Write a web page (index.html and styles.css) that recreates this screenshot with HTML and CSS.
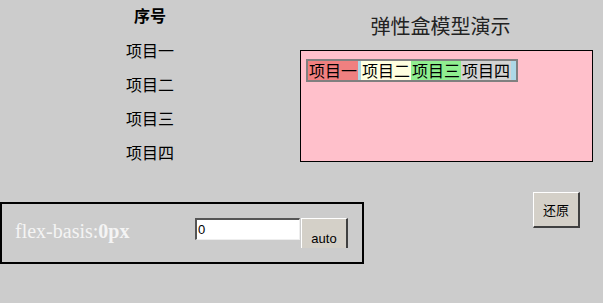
FILE: index.html
```html
<!DOCTYPE html>
<html lang="zh-CN">
<head>
    <meta charset="UTF-8">
    <title>弹性盒模型演示</title>
    <link rel="stylesheet" href="styles.css">
</head>
<body>
    <div class="top">
        <div class="list">
            <div class="list-head">序号</div>
            <div class="list-row">项目一</div>
            <div class="list-row">项目二</div>
            <div class="list-row">项目三</div>
            <div class="list-row">项目四</div>
        </div>
        <div class="demo">
            <h2 class="demo-title">弹性盒模型演示</h2>
            <div class="stage">
                <div class="flexbox">
                    <div class="item item-1">项目一</div>
                    <div class="item item-2">项目二</div>
                    <div class="item item-3">项目三</div>
                    <div class="item item-4">项目四</div>
                </div>
            </div>
        </div>
    </div>

    <div class="bottom">
        <div class="control">
            <span class="control-label">flex-basis:<b>0px</b></span>
            <input type="text" class="control-input" value="0">
            <button class="control-btn">auto</button>
        </div>
        <button class="reset">还原</button>
    </div>
</body>
</html>
```

FILE: styles.css
```css
body {
    margin: 0;
    background-color: #cccccc;
    font-family: "Noto Sans CJK SC", sans-serif;
    color: #000;
}
.top {
    display: flex;
    height: 192px;
}
.list {
    width: 300px;
    font-size: 16px;
    text-align: center;
}
.list-head {
    height: 30px;
    line-height: 30px;
    margin-bottom: 3px;
    font-weight: bold;
}
.list-row {
    height: 34px;
    line-height: 34px;
}
.demo {
    width: 293px;
}
.demo-title {
    margin: 14px 12px 12px 0;
    font-size: 20px;
    line-height: 24px;
    font-weight: normal;
    text-align: center;
    color: #222;
}
.stage {
    box-sizing: border-box;
    height: 112px;
    border: 1px solid #000;
    background-color: pink;
    padding: 8px 0 0 5px;
}
.flexbox {
    display: flex;
    box-sizing: border-box;
    width: 212px;
    height: 23px;
    border: 2px solid #808080;
    background-color: lightblue;
}
.item {
    height: 19px;
    line-height: 19px;
    font-size: 16px;
    padding: 0 1px;
}
.item-1 {
    background-color: lightcoral;
    margin-right: 3px;
}
.item-2 {
    background-color: lightyellow;
}
.item-3 {
    background-color: lightgreen;
}
.item-4 {
    background-color: #d3d3d3;
}
.bottom {
    display: flex;
    align-items: flex-start;
}
.control {
    display: flex;
    align-items: flex-start;
    box-sizing: border-box;
    width: 364px;
    height: 62px;
    margin-top: 10px;
    border: 2px solid #000;
    padding: 14px 0 0 13px;
    overflow: hidden;
}
.control-label {
    width: 180px;
    margin-top: 2px;
    font-family: "Liberation Serif", serif;
    font-size: 20px;
    line-height: 22px;
    color: #f4f4f4;
}
.control-input {
    box-sizing: border-box;
    width: 105px;
    height: 22px;
    margin: 0 1px 0 0;
    padding: 0 1px;
    border-style: solid;
    border-width: 2px 1px 1px 2px;
    border-color: #555 #eee #eee #555;
    background-color: #fff;
    font-family: "Liberation Sans", sans-serif;
    font-size: 13px;
}
.control-btn {
    box-sizing: border-box;
    width: 47px;
    height: 30px;
    margin: 0;
    padding: 9px 0 0;
    border-style: solid;
    border-width: 1px 2px 0 1px;
    border-color: #fff #404040 #404040 #fff;
    background-color: #d4d0c8;
    font-family: "Liberation Sans", sans-serif;
    font-size: 13px;
    color: #000;
}
.reset {
    box-sizing: border-box;
    width: 47px;
    height: 36px;
    margin-left: 169px;
    padding: 0;
    border-style: solid;
    border-width: 1px 2px 2px 1px;
    border-color: #fff #404040 #404040 #fff;
    background-color: #d4d0c8;
    font-family: "Noto Sans CJK SC", sans-serif;
    font-size: 13px;
    color: #000;
}
```
